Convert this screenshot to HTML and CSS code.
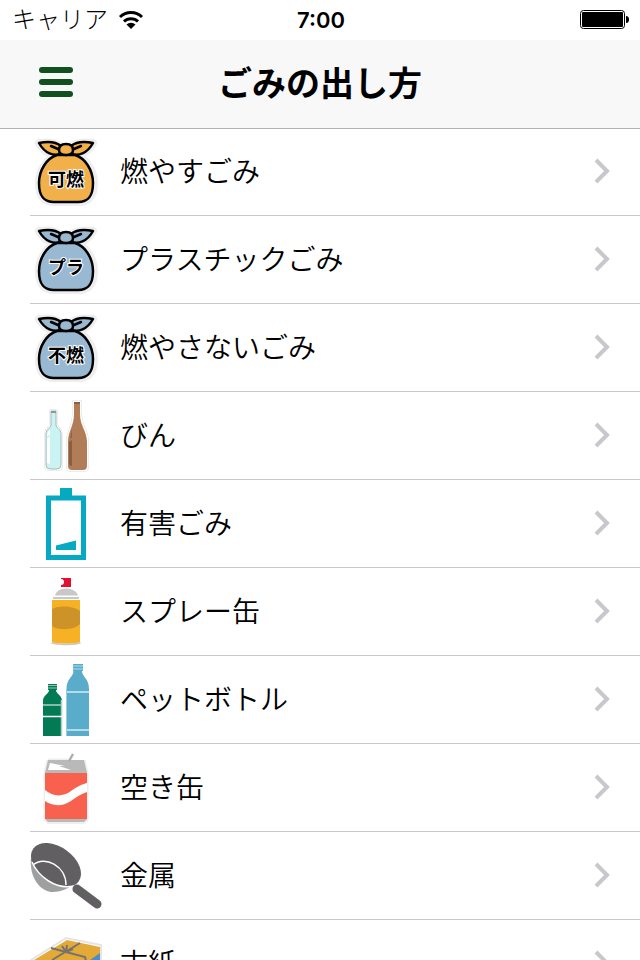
FILE: index.html
```html
<!DOCTYPE html>
<html lang="ja">

<head>
    <meta charset="UTF-8">
    <meta name="viewport" content="width=device-width, initial-scale=1.0">
    <title>ごみの出し方</title>
    <link rel="stylesheet" href="styles.css">
</head>

<body>
    <!-- Shared shapes -->
    <svg class="shapes" aria-hidden="true">
        <symbol id="bag" viewBox="0 0 72 72">
            <g class="bag-halo">
                <path d="M27 19C17 23 9 34 9 47c0 15 6 19 15 19h24c9 0 16-4 16-19 0-13-8-24-18-28z"/>
                <path d="M9 7c7-1 16-1 22 4l-1 7c-6 2-15 0-21-11zM63 7c-7-1-16-1-22 4l1 7c6 2 15 0 21-11z"/>
            </g>
            <g stroke="#000" stroke-width="2.500" stroke-linejoin="round" stroke-linecap="round" fill="currentColor">
                <path d="M27 19C17 22 9 34 9 47c0 15 6 19 15 19h24c9 0 15-4 15-19 0-13-8-25-18-28z"/>
                <path d="M9 7c7-1.500 16-2 22 3l-1 8c-6 2-15 0-21-11zM63 7c-7-1.500-16-2-22 3l1 8c6 2 15 0 21-11z"/>
                <path d="M36 8c5 0 7 2 7 6 0 3-2 5-7 5s-7-2-7-5c0-4 2-6 7-6z"/>
                <path d="M21 10l7 3M51 10l-7 3" fill="none"/>
            </g>
        </symbol>
        <symbol id="chevron" viewBox="0 0 16 26">
            <path d="M2 2l11 11L2 24" fill="none" stroke="#c7c7cc" stroke-width="4"/>
        </symbol>
    </svg>

    <!-- Status bar -->
    <div class="status-bar">
        <div class="carrier">
            <span>キャリア</span>
            <svg width="26" height="20" viewBox="0 0 26 20">
                <path d="M2 7a16 16 0 0 1 22 0M6 11.500a10 10 0 0 1 14 0" fill="none" stroke="#000" stroke-width="3"/>
                <path d="M13 19l-4.500-4.500a6.500 6.500 0 0 1 9 0z"/>
            </svg>
        </div>
        <div class="time">7:00</div>
        <div class="battery">
            <svg width="50" height="20" viewBox="0 0 50 20">
                <rect x="0.500" y="0.500" width="44" height="18" rx="3" fill="none" stroke="#000"/>
                <rect x="2" y="2" width="41" height="15" rx="1"/>
                <path d="M46 6q3 0 3 3.500T46 13z"/>
            </svg>
        </div>
    </div>

    <!-- Navigation bar -->
    <header class="nav-bar">
        <button class="menu-btn" aria-label="メニュー">
            <span></span>
            <span></span>
            <span></span>
        </button>
        <h1>ごみの出し方</h1>
    </header>

    <!-- Category list -->
    <main class="list">
        <a class="row" href="#">
            <svg class="icon bag-orange" viewBox="0 0 72 72">
                <use href="#bag"/>
                <text class="bag-text" x="36" y="50">可燃</text>
            </svg>
            <span class="label">燃やすごみ</span>
            <svg class="chevron"><use href="#chevron"/></svg>
        </a>
        <a class="row" href="#">
            <svg class="icon bag-blue" viewBox="0 0 72 72">
                <use href="#bag"/>
                <text class="bag-text" x="36" y="50">プラ</text>
            </svg>
            <span class="label">プラスチックごみ</span>
            <svg class="chevron"><use href="#chevron"/></svg>
        </a>
        <a class="row" href="#">
            <svg class="icon bag-blue" viewBox="0 0 72 72">
                <use href="#bag"/>
                <text class="bag-text" x="36" y="50">不燃</text>
            </svg>
            <span class="label">燃やさないごみ</span>
            <svg class="chevron"><use href="#chevron"/></svg>
        </a>
        <a class="row" href="#">
            <!-- bottles -->
            <svg class="icon" viewBox="0 0 72 72">
                <g stroke="#ddd" stroke-width="4" fill="#ddd" stroke-linejoin="round">
                    <path d="M21 11h5v14c0 3 5 4 5 9v31q0 4-4 4h-7q-4 0-4-4V34c0-5 5-6 5-9z"/>
                    <path d="M44 2h6v12c0 12 7 17 7 28v24q0 4-4 4H42q-4 0-4-4V42c0-11 6-16 6-28z"/>
                </g>
                <g stroke="#fff" stroke-width="3" fill="#fff" stroke-linejoin="round">
                    <path d="M21 11h5v14c0 3 5 4 5 9v31q0 4-4 4h-7q-4 0-4-4V34c0-5 5-6 5-9z"/>
                    <path d="M44 2h6v12c0 12 7 17 7 28v24q0 4-4 4H42q-4 0-4-4V42c0-11 6-16 6-28z"/>
                </g>
                <path d="M21 11h5v14c0 3 5 4 5 9v31q0 4-4 4h-7q-4 0-4-4V34c0-5 5-6 5-9z" fill="#c9f4f3" stroke="#a9b9b9"/>
                <path d="M21 11h5v2h-5z" fill="#8b9b9b"/>
                <path d="M17 36c0-3 1-5 3-6v5zM17 38l3-1v27l-3-1z" fill="#fff"/>
                <path d="M44 2h6v12c0 12 7 17 7 28v24q0 4-4 4H42q-4 0-4-4V42c0-11 6-16 6-28z" fill="#b17c58"/>
                <path d="M44 2h6v2h-6zM39 42l3-2v26q-3 0-3-3z" fill="#8d5d40"/>
                <path d="M42 29l-2 9 2 0z" fill="#946344"/>
            </svg>
            <span class="label">びん</span>
            <svg class="chevron"><use href="#chevron"/></svg>
        </a>
        <a class="row" href="#">
            <!-- battery -->
            <svg class="icon" viewBox="0 0 72 72" fill="#05a9c1">
                <path d="M30 0h12v8H30z"/>
                <path d="M18.500 10h35v59.500h-35z" fill="none" stroke="#05a9c1" stroke-width="5"/>
                <path d="M26 57.500l20-5V62H26z"/>
            </svg>
            <span class="label">有害ごみ</span>
            <svg class="chevron"><use href="#chevron"/></svg>
        </a>
        <a class="row" href="#">
            <!-- spray can -->
            <svg class="icon" viewBox="0 0 72 72">
                <path d="M31 2h10v9H31v-2a3 3 0 0 0 0-6z" fill="#df1030"/>
                <path d="M25 19.500c1-4 5-7 11-7s11 3 12 7zM23 21h26v2H23zM22 66c4 2 24 2 28 0l1 1c-2 3-28 3-30 0z" fill="#c8c8c9"/>
                <path d="M22 24h28v42c-5 2-23 2-28 0z" fill="#f6b124"/>
                <path d="M22 33c7-4 22-3 28 2v13c-6 6-21 7-28 2z" fill="#cd9328"/>
            </svg>
            <span class="label">スプレー缶</span>
            <svg class="chevron"><use href="#chevron"/></svg>
        </a>
        <a class="row" href="#">
            <!-- PET bottles -->
            <svg class="icon" viewBox="0 0 72 72">
                <path d="M18 20h9v6h-1c0 4 6 5 6 11v35H13V37c0-6 6-7 6-11h-1z" fill="#027b55"/>
                <path d="M18 21.500h9M18 24h9" stroke="#8fc4b1"/>
                <path d="M13 41h19M31.500 36v36" stroke="#a9d2c5" stroke-width="1.500" fill="none"/>
                <path d="M13 52.500h19" stroke="#fff" stroke-width="1.500"/>
                <path d="M43 0h10v7h-1c0 6 7 7 7 18v47H36.500V25c0-11 7-12 7-18H43z" fill="#5aadca"/>
                <path d="M43 2h10M43 5h10" stroke="#b5dce8"/>
                <path d="M36.500 28H59M36.500 66H59" stroke="#b5dce8" stroke-width="2"/>
                <path d="M36.500 25v47" stroke="#9bcddd"/>
            </svg>
            <span class="label">ペットボトル</span>
            <svg class="chevron"><use href="#chevron"/></svg>
        </a>
        <a class="row" href="#">
            <!-- can -->
            <svg class="icon" viewBox="0 0 72 72">
                <path d="M18 8h22l3-6M54 8l3 13v47l-4 3H19l-4-3V21l3-13" fill="none" stroke="#eee" stroke-width="3"/>
                <path d="M18 8h36l3 13H15zM15 67h42l-3 3H18z" fill="#b9b9ba"/>
                <path d="M39 9l4-7" stroke="#a9a9aa" stroke-width="2"/>
                <path d="M20 11l15 3-6 0 12 4-23 0z" fill="#fff"/>
                <path d="M15 21h42v46H15z" fill="#f7614d"/>
                <path d="M15 38c8 7 18 7 26 1 6-4 9-6 16-8v9c-6 2-11 5-16 9-9 6-19 5-26 0z" fill="#fff"/>
            </svg>
            <span class="label">空き缶</span>
            <svg class="chevron"><use href="#chevron"/></svg>
        </a>
        <a class="row" href="#">
            <!-- frying pan -->
            <svg class="icon" viewBox="0 0 72 72">
                <path d="M1 18c-2 19 9 34 22 34 7 0 13-3 19-6z" fill="#9da09e"/>
                <ellipse cx="26" cy="25" rx="28" ry="18" transform="rotate(36 26 25)" fill="#625f62"/>
                <path d="M3 25c12-10 33 1 33 20M2 22c6 14 23 28 42 24" fill="none" stroke="#fff" stroke-width="1.500"/>
                <path d="M47 49l20 15" stroke="#625f62" stroke-width="9" stroke-linecap="round"/>
            </svg>
            <span class="label">金属</span>
            <svg class="chevron"><use href="#chevron"/></svg>
        </a>
        <a class="row" href="#">
            <!-- bundled paper -->
            <svg class="icon" viewBox="0 0 72 72">
                <path d="M1 32L36 10l35 7v24L40 62 1 52z" fill="#fff" stroke="#e4e4e4" stroke-width="2"/>
                <path d="M4 32l33-20 33 7v6L54 46z" fill="#e3aa38"/>
                <path d="M70 25v17L40 61V46z" fill="#4e8cc5"/>
                <path d="M4 32l36 12v17L4 51z" fill="#d79b2d"/>
                <path d="M21 20l15 4 19 5 2 8M50 15L22 32M36 24l-4-6M36 24l1-7M36 24l7-3" fill="none" stroke="#76736c" stroke-width="2"/>
            </svg>
            <span class="label">古紙</span>
            <svg class="chevron"><use href="#chevron"/></svg>
        </a>
    </main>
</body>

</html>
```
FILE: styles.css
```css
/* Basic Reset */
* {
    margin: 0;
    padding: 0;
    box-sizing: border-box;
}

body {
    font-family: "Noto Sans CJK JP", sans-serif;
    font-weight: 350;
    display: flex;
    flex-direction: column;
    height: 100vh;
    overflow: hidden;
    background-color: white;
    color: black;
}

.shapes {
    display: none;
}

/* Status bar */
.status-bar {
    display: grid;
    grid-template-columns: 1fr auto 1fr;
    align-items: center;
    flex-shrink: 0;
    height: 40px;
    padding: 0 10px 0 12px;
}

.carrier {
    display: flex;
    align-items: center;
    gap: 10px;
    font-size: 24px;
    font-weight: 300;
    line-height: 36px;
}

.carrier span {
    padding-bottom: 4px;
}

.time {
    font-family: Inter, sans-serif;
    font-size: 22px;
    font-weight: 600;
}

.battery {
    display: flex;
    justify-content: flex-end;
}

/* Navigation bar */
.nav-bar {
    display: grid;
    grid-template-columns: 1fr auto 1fr;
    align-items: center;
    flex-shrink: 0;
    height: 88px;
    padding: 0 39px 4px;
    background-color: #f8f8f8;
    box-shadow: 0 1px 0 #b2b2b2;
    z-index: 1;
}

.nav-bar h1 {
    font-size: 34px;
    line-height: 84px;
    font-weight: bold;
}

.menu-btn {
    display: flex;
    flex-direction: column;
    gap: 6px;
    width: 34px;
    border: none;
    background: none;
    cursor: pointer;
}

.menu-btn span {
    height: 6px;
    border-radius: 3px;
    background-color: #10511f;
}

/* Category list */
.list {
    flex: 1;
    padding-left: 30px;
    overflow-y: auto;
    scrollbar-width: none;
}

.row {
    display: flex;
    align-items: center;
    gap: 18px;
    height: 88px;
    padding-right: 30px;
    border-bottom: 1px solid #c8c7cc;
    color: black;
    text-decoration: none;
}

.icon {
    width: 72px;
    height: 72px;
    flex-shrink: 0;
}

.label {
    flex: 1;
    padding-bottom: 4px;
    font-size: 28px;
    line-height: 40px;
}

.chevron {
    width: 16px;
    height: 26px;
    margin-bottom: 2px;
}

/* Garbage bags */
.bag-orange {
    color: #f2b04a;
}

.bag-blue {
    color: #99b9d3;
}

.bag-halo {
    fill: #eee;
    stroke: #eee;
    stroke-width: 8px;
    stroke-linejoin: round;
}

.bag-text {
    font-size: 18px;
    font-weight: bold;
    text-anchor: middle;
    stroke: white;
    stroke-width: 2px;
    paint-order: stroke;
}
```
